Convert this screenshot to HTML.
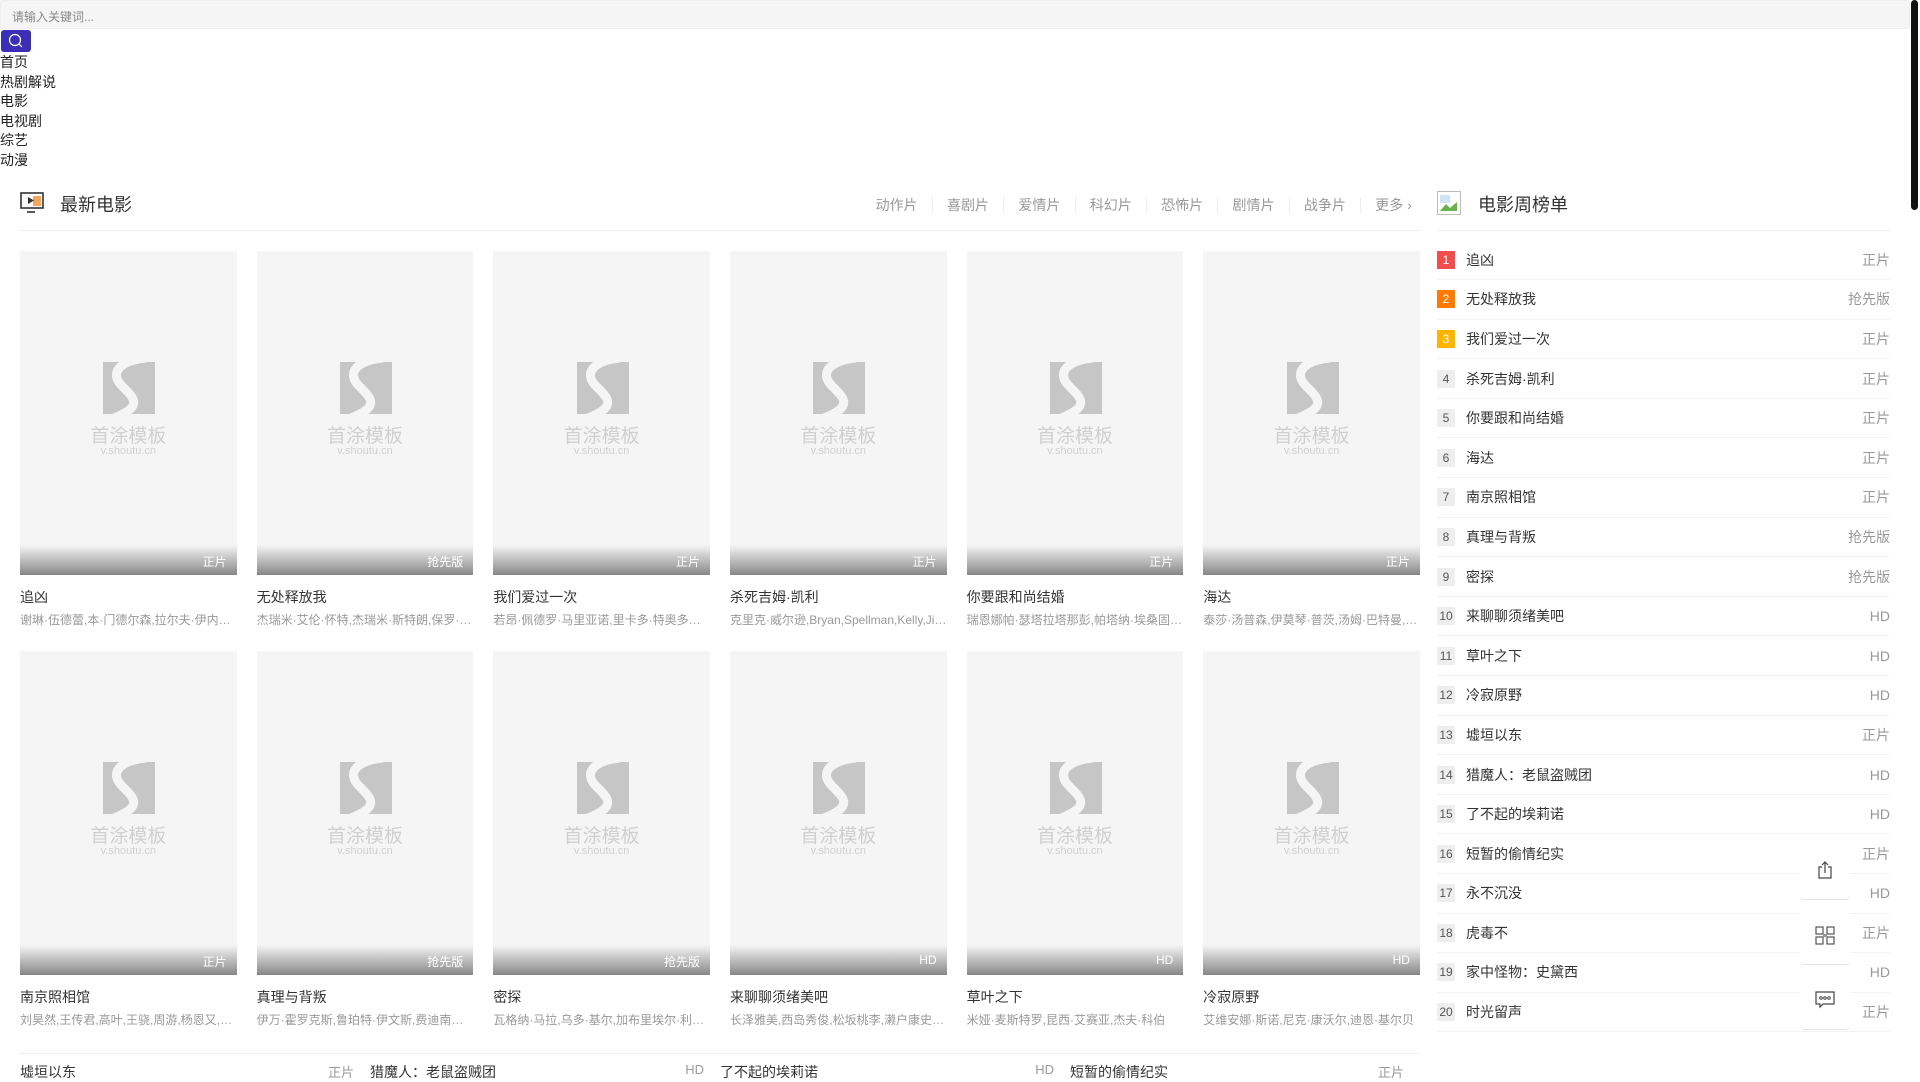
<!DOCTYPE html>
<html><head><meta charset="utf-8"><style>
*{margin:0;padding:0;box-sizing:border-box}
body{width:1920px;height:1080px;overflow:hidden;background:#fff;font-family:"Liberation Sans","Noto Sans CJK SC",sans-serif;color:#333;position:relative}
.search{position:absolute;left:0;top:0;width:1910px;height:29px;background:#f5f5f5;border:1px solid #eee;border-radius:3px;font-size:12px;color:#888;padding:7px 11px}
.sbtn{position:absolute;left:1px;top:30px;width:30px;height:22px;background:#3a2fb5;border-radius:3px}
.nav{position:absolute;left:0;top:53px;font-size:14px;line-height:19.6px;color:#222}
.hd{position:absolute;top:185px;height:46px;border-bottom:1px solid #eee}
.hd .t{position:absolute;font-size:18px;top:6px;color:#333}
.tabs{position:absolute;right:-6px;top:12px;font-size:14px;color:#999;display:flex}
.tabs span{padding:0 14.2px;border-left:1px solid #eee;line-height:16px}
.tabs span:first-child{border:none}
.grid{position:absolute;left:20px;width:1400px;display:grid;grid-template-columns:repeat(6,216.67px);column-gap:20px}
.card .p{height:324px;background:#f5f5f5;position:relative}
.logo{position:absolute;left:50%;top:105px;margin-left:-28px}
.w1{position:absolute;width:100%;text-align:center;top:170px;font-size:19px;color:#d0d0d0}
.w2{position:absolute;width:100%;text-align:center;top:194px;font-size:11px;color:#d0d0d0}
.g{position:absolute;left:0;right:0;bottom:0;height:30px;background:linear-gradient(rgba(0,0,0,0),rgba(0,0,0,.45));color:#fff;font-size:12px;text-align:right;padding:8px 10px 0 0}
.n{font-size:14px;margin-top:12px;height:18px}
.s{font-size:12px;color:#999;margin-top:6px;white-space:nowrap;overflow:hidden;text-overflow:ellipsis}
.bl{position:absolute;left:20px;top:1053px;width:1400px;border-top:1px dotted #e5e5e5;display:flex}
.bl div{width:349px;margin-right:16px;display:flex;justify-content:space-between;font-size:14px;padding-top:8px}
.bl i{font-style:normal;color:#999;font-size:13px}
.rk{position:absolute;left:1437px;top:240.5px;width:453px}
.rk div{height:39.6px;border-bottom:1px dotted #e8e8e8;display:flex;align-items:center;font-size:14px}
.rk b{font-weight:normal;width:18px;height:18px;background:#eee;color:#555;font-size:12px;text-align:center;line-height:18px;margin-right:11px}
.rk i{font-style:normal;margin-left:auto;color:#999;font-size:14px}
.fb{position:absolute;left:1800px;width:50px;height:60px;background:#fff;border-bottom:1px solid #e4e4e4;border-radius:0 0 4px 4px;display:flex;align-items:center;justify-content:center}
.sb{position:absolute;left:1911px;top:0;width:7px;height:210px;background:#111;border-radius:4px}
</style></head><body>
<svg width="0" height="0" style="position:absolute"><defs><symbol id="lg" viewBox="0 0 56 64"><rect x="3" y="6" width="52" height="52" fill="#c6c6c6"/><path d="M46 2 C22 4 8 16 22 30 C34 42 44 50 14 62" fill="none" stroke="#f5f5f5" stroke-width="9"/></symbol></defs></svg>
<div class="search">请输入关键词...</div>
<div class="sbtn"><svg width="30" height="22"><circle cx="14" cy="10" r="5.5" fill="none" stroke="#fff" stroke-width="1.2"/><line x1="18" y1="14" x2="21" y2="17" stroke="#fff" stroke-width="1.2"/></svg></div>
<div class="nav">首页<br>热剧解说<br>电影<br>电视剧<br>综艺<br>动漫</div>
<div class="hd" style="left:20px;width:1400px">
<svg style="position:absolute;left:0;top:7px" width="24" height="22"><rect x="1" y="1" width="22" height="15" fill="none" stroke="#333" stroke-width="1.6"/><rect x="13" y="4" width="8" height="10" fill="#f4a65b"/><path d="M8 5 L14 8.5 L8 12Z" fill="#333"/><line x1="7" y1="20" x2="15" y2="20" stroke="#333" stroke-width="1.6"/></svg>
<div class="t" style="left:40px">最新电影</div>
<div class="tabs"><span>动作片</span><span>喜剧片</span><span>爱情片</span><span>科幻片</span><span>恐怖片</span><span>剧情片</span><span>战争片</span><span>更多 ›</span></div>
</div>
<div class="grid" style="top:251px">
<div class="card"><div class="p"><svg class="logo" width="56" height="64"><use href="#lg"/></svg><div class="w1">首涂模板</div><div class="w2">v.shoutu.cn</div><div class="g">正片</div></div><div class="n">追凶</div><div class="s">谢琳·伍德蕾,本·门德尔森,拉尔夫·伊内森,马克·奥布莱恩</div></div>
<div class="card"><div class="p"><svg class="logo" width="56" height="64"><use href="#lg"/></svg><div class="w1">首涂模板</div><div class="w2">v.shoutu.cn</div><div class="g">抢先版</div></div><div class="n">无处释放我</div><div class="s">杰瑞米·艾伦·怀特,杰瑞米·斯特朗,保罗·沃特·豪泽</div></div>
<div class="card"><div class="p"><svg class="logo" width="56" height="64"><use href="#lg"/></svg><div class="w1">首涂模板</div><div class="w2">v.shoutu.cn</div><div class="g">正片</div></div><div class="n">我们爱过一次</div><div class="s">若昂·佩德罗·马里亚诺,里卡多·特奥多罗·罗沙</div></div>
<div class="card"><div class="p"><svg class="logo" width="56" height="64"><use href="#lg"/></svg><div class="w1">首涂模板</div><div class="w2">v.shoutu.cn</div><div class="g">正片</div></div><div class="n">杀死吉姆·凯利</div><div class="s">克里克·威尔逊,Bryan,Spellman,Kelly,Jim,Brown</div></div>
<div class="card"><div class="p"><svg class="logo" width="56" height="64"><use href="#lg"/></svg><div class="w1">首涂模板</div><div class="w2">v.shoutu.cn</div><div class="g">正片</div></div><div class="n">你要跟和尚结婚</div><div class="s">瑞恩娜帕·瑟塔拉塔那彭,帕塔纳·埃桑固,他他</div></div>
<div class="card"><div class="p"><svg class="logo" width="56" height="64"><use href="#lg"/></svg><div class="w1">首涂模板</div><div class="w2">v.shoutu.cn</div><div class="g">正片</div></div><div class="n">海达</div><div class="s">泰莎·汤普森,伊莫琴·普茨,汤姆·巴特曼,妮娜·霍斯</div></div>
</div>
<div class="grid" style="top:651px">
<div class="card"><div class="p"><svg class="logo" width="56" height="64"><use href="#lg"/></svg><div class="w1">首涂模板</div><div class="w2">v.shoutu.cn</div><div class="g">正片</div></div><div class="n">南京照相馆</div><div class="s">刘昊然,王传君,高叶,王骁,周游,杨恩又,史策</div></div>
<div class="card"><div class="p"><svg class="logo" width="56" height="64"><use href="#lg"/></svg><div class="w1">首涂模板</div><div class="w2">v.shoutu.cn</div><div class="g">抢先版</div></div><div class="n">真理与背叛</div><div class="s">伊万·霍罗克斯,鲁珀特·伊文斯,费迪南德·肯</div></div>
<div class="card"><div class="p"><svg class="logo" width="56" height="64"><use href="#lg"/></svg><div class="w1">首涂模板</div><div class="w2">v.shoutu.cn</div><div class="g">抢先版</div></div><div class="n">密探</div><div class="s">瓦格纳·马拉,乌多·基尔,加布里埃尔·利昂尼</div></div>
<div class="card"><div class="p"><svg class="logo" width="56" height="64"><use href="#lg"/></svg><div class="w1">首涂模板</div><div class="w2">v.shoutu.cn</div><div class="g">HD</div></div><div class="n">来聊聊须绪美吧</div><div class="s">长泽雅美,西岛秀俊,松坂桃李,濑户康史,中</div></div>
<div class="card"><div class="p"><svg class="logo" width="56" height="64"><use href="#lg"/></svg><div class="w1">首涂模板</div><div class="w2">v.shoutu.cn</div><div class="g">HD</div></div><div class="n">草叶之下</div><div class="s">米娅·麦斯特罗,昆西·艾赛亚,杰夫·科伯</div></div>
<div class="card"><div class="p"><svg class="logo" width="56" height="64"><use href="#lg"/></svg><div class="w1">首涂模板</div><div class="w2">v.shoutu.cn</div><div class="g">HD</div></div><div class="n">冷寂原野</div><div class="s">艾维安娜·斯诺,尼克·康沃尔,迪恩·基尔贝</div></div>
</div>
<div class="bl"><div>墟垣以东<i>正片</i></div><div>猎魔人：老鼠盗贼团<i>HD</i></div><div>了不起的埃莉诺<i>HD</i></div><div>短暂的偷情纪实<i>正片</i></div></div>
<div class="hd" style="left:1437px;width:453px">
<svg style="position:absolute;left:0;top:6px" width="25" height="25"><rect x="0.5" y="0.5" width="23" height="23" fill="#fff" stroke="#bbb"/><path d="M3 20 L9 13 L13 17 L20 11 L20 20Z" fill="#6ab04c"/><rect x="3" y="4" width="10" height="8" fill="#cfe3f5"/></svg>
<div class="t" style="left:41px">电影周榜单</div></div>
<div class="rk">
<div><b style="background:#f24c4c;color:#fff">1</b>追凶<i>正片</i></div>
<div><b style="background:#ff7a00;color:#fff">2</b>无处释放我<i>抢先版</i></div>
<div><b style="background:#ffb400;color:#fff">3</b>我们爱过一次<i>正片</i></div>
<div><b>4</b>杀死吉姆·凯利<i>正片</i></div>
<div><b>5</b>你要跟和尚结婚<i>正片</i></div>
<div><b>6</b>海达<i>正片</i></div>
<div><b>7</b>南京照相馆<i>正片</i></div>
<div><b>8</b>真理与背叛<i>抢先版</i></div>
<div><b>9</b>密探<i>抢先版</i></div>
<div><b>10</b>来聊聊须绪美吧<i>HD</i></div>
<div><b>11</b>草叶之下<i>HD</i></div>
<div><b>12</b>冷寂原野<i>HD</i></div>
<div><b>13</b>墟垣以东<i>正片</i></div>
<div><b>14</b>猎魔人：老鼠盗贼团<i>HD</i></div>
<div><b>15</b>了不起的埃莉诺<i>HD</i></div>
<div><b>16</b>短暂的偷情纪实<i>正片</i></div>
<div><b>17</b>永不沉没<i>HD</i></div>
<div><b>18</b>虎毒不<i>正片</i></div>
<div><b>19</b>家中怪物：史黛西<i>HD</i></div>
<div><b>20</b>时光留声<i>正片</i></div>
</div>
<div class="fb" style="top:840px"><svg width="18" height="20"><path d="M6 7 H3 V18 H15 V7 H12 M9 13 V2 M6 5 L9 2 L12 5" fill="none" stroke="#444" stroke-width="1.2"/></svg></div>
<div class="fb" style="top:905px"><svg width="20" height="20"><rect x="1" y="2" width="7" height="7" fill="none" stroke="#555" stroke-width="1.2"/><rect x="12" y="2" width="7" height="7" fill="none" stroke="#555" stroke-width="1.2"/><rect x="1" y="12" width="7" height="7" fill="none" stroke="#555" stroke-width="1.2"/><rect x="12" y="12" width="7" height="7" fill="none" stroke="#555" stroke-width="1.2"/><rect x="8" y="9" width="4" height="3" fill="#999"/></svg></div>
<div class="fb" style="top:970px"><svg width="20" height="20"><path d="M1 2 H19 V14 H8 L5 17 V14 H1Z" fill="none" stroke="#444" stroke-width="1.2"/><circle cx="6" cy="8" r="1.3" fill="none" stroke="#444"/><circle cx="10" cy="8" r="1.3" fill="none" stroke="#444"/><circle cx="14" cy="8" r="1.3" fill="none" stroke="#444"/></svg></div>
<div class="sb"></div>
</body></html>
